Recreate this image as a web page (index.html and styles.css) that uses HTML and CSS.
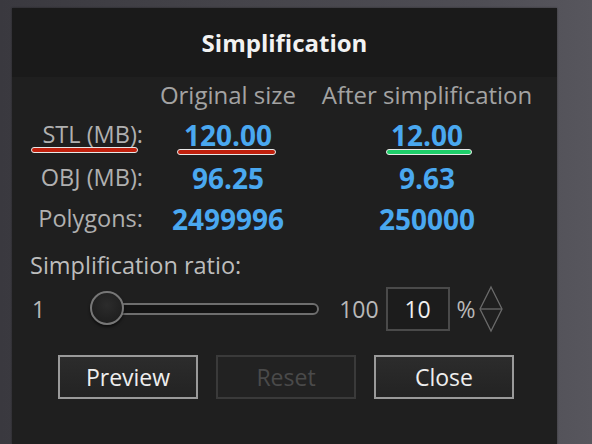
FILE: index.html
```html
<!DOCTYPE html>
<html>
<head>
<meta charset="utf-8">
<link rel="stylesheet" href="styles.css">
</head>
<body>
<div class="dialog">
  <div class="header">Simplification</div>
  <div class="content">
    <div class="table">
      <div></div>
      <div class="colhead">Original size</div>
      <div class="colhead">After simplification</div>

      <div class="label"><span class="mark red lbl">STL (MB):</span></div>
      <div class="val"><span class="mark red v1">120.00</span></div>
      <div class="val"><span class="mark green v2">12.00</span></div>

      <div class="label">OBJ (MB):</div>
      <div class="val">96.25</div>
      <div class="val">9.63</div>

      <div class="label">Polygons:</div>
      <div class="val">2499996</div>
      <div class="val">250000</div>
    </div>

    <div class="ratio-label">Simplification ratio:</div>
    <div class="ratio-row">
      <span class="min">1</span>
      <div class="slider">
        <div class="track"></div>
        <div class="thumb"></div>
      </div>
      <span class="max">100</span>
      <div class="input">10</div>
      <span class="pct">%</span>
      <svg class="spin" width="26" height="48" viewBox="0 0 26 48">
        <path d="M13 2 L24 24 L13 46 L2 24 Z" fill="none" stroke="#6a6a6a" stroke-width="1.3"/>
        <line x1="2" y1="24" x2="24" y2="24" stroke="#6a6a6a" stroke-width="1.3"/>
      </svg>
    </div>

    <div class="buttons">
      <div class="btn">Preview</div>
      <div class="btn disabled">Reset</div>
      <div class="btn">Close</div>
    </div>
  </div>
</div>
</body>
</html>
```
FILE: styles.css
```css
html, body {
  margin: 0;
  padding: 0;
}
body {
  width: 592px;
  height: 444px;
  overflow: hidden;
  background: linear-gradient(90deg, #3a393f 0%, #45444a 40%, #4e4d54 80%, #57565d 100%);
  font-family: "Open Sans", "Noto Sans", sans-serif;
  padding: 8px 0 0 12px;
  box-sizing: border-box;
}
.dialog {
  width: 545px;
  height: 436px;
  background: #1f1f1f;
  box-shadow: 0 0 2px rgba(0,0,0,0.4);
}
.header {
  height: 69px;
  background: #1a1a1a;
  color: #f2f2f2;
  font-weight: 700;
  font-size: 24px;
  display: flex;
  align-items: center;
  justify-content: center;
}
.table {
  display: grid;
  grid-template-columns: 138px 156px 242px;
  grid-template-rows: 36px 44px 42px 40px;
  align-items: center;
  line-height: 1;
}
.colhead {
  text-align: center;
  color: #a3a3a3;
  font-size: 24px;
  white-space: nowrap;
}
.label {
  text-align: right;
  padding-right: 7px;
  color: #b0b0b0;
  font-size: 23.5px;
  white-space: nowrap;
}
.val {
  text-align: center;
  color: #4aa8f0;
  font-weight: 700;
  font-size: 28px;
}
.mark {
  position: relative;
  display: inline-block;
}
.mark::after {
  content: "";
  position: absolute;
  bottom: -6px;
  height: 4px;
  border: 1px solid #e8e8e8;
  border-radius: 4px;
}
.mark.red::after {
  background: #c1200d;
}
.mark.green::after {
  background: #1ecf6a;
}
.lbl::after {
  left: -11px;
  right: 5px;
}
.v1::after {
  left: -7px;
  right: -4px;
}
.v2::after {
  left: -5px;
  right: -9px;
}
.ratio-label {
  margin-top: 12px;
  padding-left: 18px;
  color: #bdbdbd;
  font-size: 23.5px;
  height: 28px;
  line-height: 28px;
}
.ratio-row {
  display: flex;
  align-items: center;
  height: 48px;
  margin-top: 6px;
  color: #b8b8b8;
  font-size: 23px;
}
.min {
  margin-left: 20px;
}
.slider {
  position: relative;
  margin-left: 45px;
  width: 229px;
  height: 36px;
}
.track {
  position: absolute;
  left: 12px;
  right: 0;
  top: 12px;
  height: 8px;
  border: 2px solid #6e6e6e;
  border-radius: 7px;
  background: #141414;
}
.thumb {
  position: absolute;
  left: 0;
  top: 0;
  width: 30px;
  height: 30px;
  border: 2px solid #777;
  border-radius: 50%;
  background: radial-gradient(circle at 50% 40%, #2c2c2c, #1a1a1a);
  box-shadow: 0 2px 3px rgba(0,0,0,0.6);
}
.max {
  margin-left: 20px;
}
.input {
  margin-left: 7px;
  width: 60px;
  height: 40px;
  border: 2px solid #4a4a4a;
  background: #1c1c1c;
  color: #f0f0f0;
  font-size: 23px;
  display: flex;
  align-items: center;
  justify-content: center;
}
.pct {
  margin-left: 7px;
}
.spin {
  margin-left: 2px;
}
.buttons {
  display: flex;
  gap: 18px;
  margin-top: 22px;
  padding-left: 46px;
}
.btn {
  width: 136px;
  height: 40px;
  border: 2px solid #9a9a9a;
  background: linear-gradient(#2c2c2c, #232323);
  color: #eeeeee;
  font-size: 23px;
  display: flex;
  align-items: center;
  justify-content: center;
}
.btn.disabled {
  border-color: #3a3a3a;
  color: #4a4a4a;
  background: #222;
}
```
